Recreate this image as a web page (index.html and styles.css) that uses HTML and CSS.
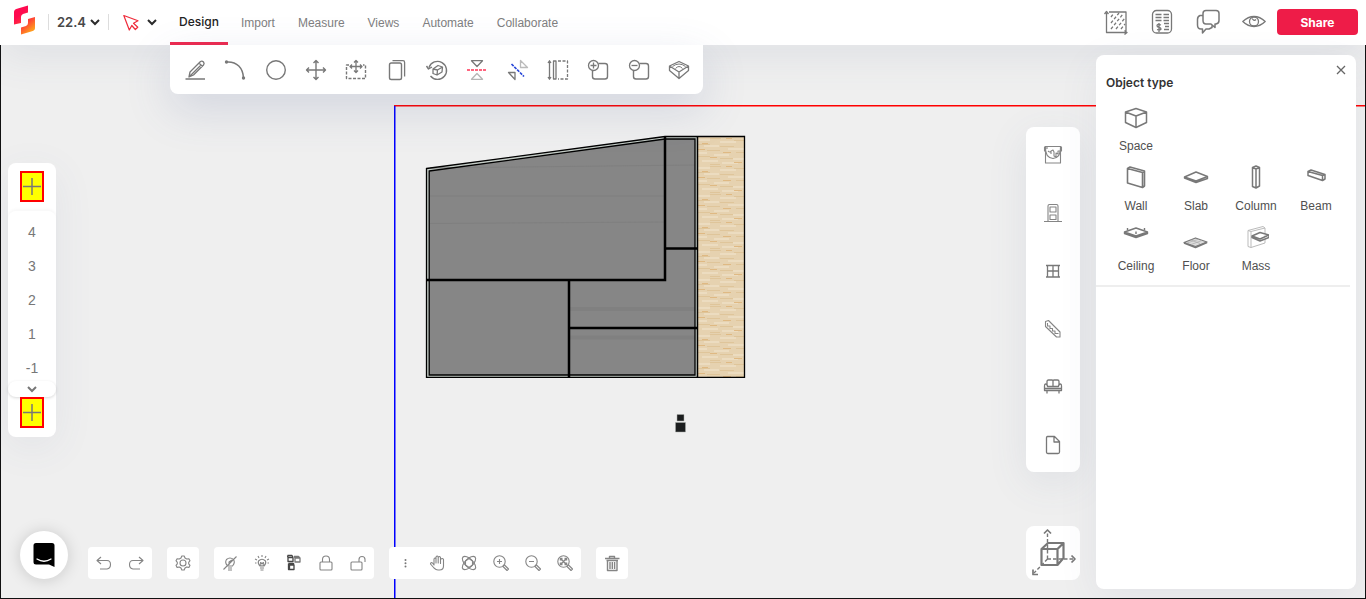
FILE: index.html
```html
<!DOCTYPE html>
<html lang="en">
<head>
<meta charset="utf-8">
<meta name="viewport" content="width=device-width, initial-scale=1">
<title>Design workspace</title>
<link rel="stylesheet" href="styles.css">
</head>
<body>
<div class="app">
  <svg class="scene" role="img" aria-label="Floor plan">
    <defs>
      <pattern id="wood" x="698" y="137" width="47" height="28" patternUnits="userSpaceOnUse">
        <rect width="47" height="28" fill="#e6d2b0"/>
        <path stroke="#ecdcc0" stroke-width="2" d="M0 3H12M22 5H38M6 9H21M30 12H47M0 16H9M16 18H31M35 22H47M4 24H20M24 26H40"/>
        <path stroke="#dfc59a" stroke-width="1" d="M12 1.500H23M36 3.500H47M0 7.500H12M22 9.500H36M9 13.500H22M38 15.500H47M0 19.500H12M22 21.500H35M12 27.500H22"/>
        <path stroke="#dfb983" stroke-width="1" d="M28 1.500H34M4 6.500H10M0 12.500H7M25 15.500H33M12 20.500H19M36 25.500H44"/>
      </pattern>
    </defs>
    <line x1="394" y1="105.750" x2="100%" y2="105.750" stroke="#f00" stroke-width="1.500"/>
    <line x1="394.750" y1="106" x2="394.750" y2="100%" stroke="#00f" stroke-width="1.500"/>
    <path d="M426.500 168.500L665 136.500H745V377H426.500Z" fill="#c4ccc6"/>
    <path d="M429 171L665 139H695V375H429Z" fill="#868686"/>
    <path d="M430 196H664M430 223.500L664 222M430 168L695 165" stroke="#7f7f7f" fill="none"/>
    <path d="M570 309H695M570 337.500H695" stroke="#808080" stroke-width="4"/>
    <rect x="698" y="137" width="47" height="240" fill="url(#wood)"/>
    <g fill="none" stroke="#000">
      <path stroke-width="1.300" d="M426.500 168.500L665 136.500H744.500V377.300H426.500Z"/>
      <path stroke-width="1.300" d="M429.200 171L665 139H695V375H429.200Z"/>
      <path stroke-width="1.500" d="M697.500 137V377"/>
      <path stroke-width="2.500" d="M665 137V280H427M569 280V377M569 328H697M665 248.500H697"/>
    </g>
    <path fill="#1b1d1e" stroke="#a9aca9" stroke-width=".5" d="M677 414.500h7v6.500h-7zM675.500 422.500h10v9.500h-10z"/>
  </svg>

  <header class="topbar">
    <a class="logo" href="#" aria-label="Home">
      <svg width="22" height="30" viewBox="0 0 22 30"><defs><linearGradient id="lg" x1="0" y1="0" x2=".6" y2="1"><stop offset=".35" stop-color="#ff0a50"/><stop offset=".7" stop-color="#ff4036"/><stop offset="1" stop-color="#ff9a1e"/></linearGradient></defs><path fill="url(#lg)" d="M0 7Q0 4.500 3 3.700L14 .5V7.500L9 9Q7 9.800 7 12V18L0 19.500ZM21 12V23Q21 25.500 18 26.300L7 29.500V22.500L12 21Q14 20.200 14 18V14Z"/></svg>
    </a>
    <button class="version" type="button">22.4 <svg width="10" height="8" viewBox="0 0 10 8"><path class="chev" d="M1 2l4 4 4-4"/></svg></button>
    <button class="pointer" type="button" aria-label="Selection tool">
      <svg width="16" height="17" viewBox="0 0 16 17"><path fill="none" stroke="#ef2b3a" stroke-width="1.200" stroke-linejoin="round" d="M.8 1.500L15 6.800 10.500 9.300 14.800 13.200 12.300 15.500 8.800 11.500 6.300 16Z"/></svg>
      <svg width="12" height="8" viewBox="0 0 12 8"><path class="chev" d="M2 2l4 4 4-4"/></svg>
    </button>
    <nav class="tabs">
      <a class="tab active" href="#">Design</a>
      <a class="tab" href="#">Import</a>
      <a class="tab" href="#">Measure</a>
      <a class="tab" href="#">Views</a>
      <a class="tab" href="#">Automate</a>
      <a class="tab" href="#">Collaborate</a>
    </nav>
    <div class="actions">
      <button type="button" aria-label="Area"><svg class="ic" width="24" height="26" viewBox="0 0 24 26"><path d="M2.500 4V23.500H22M.5 5L2.500 2.500 4.500 5M20.500 21.500L23 23.500 20.500 25.500M22 22V3H5"/><path stroke-dasharray="3 2" d="M7 8l3-4M7 14L15 4M7 20L19 5M12 20L21 9M17 20l4-5"/></svg></button>
      <button type="button" aria-label="Costs"><svg class="ic" width="24" height="26" viewBox="0 0 24 26"><rect x="2.500" y="1.500" width="19" height="22.500" rx="4"/><path d="M5.500 5.500h6M13.500 5.500H19M5.500 8.500h6M13.500 8.500H19M5.500 11.500h6M13.500 11.500H19M14 14.500h5M15 17.500h4M14 20.500h5M11 16Q7 14.500 7 16.800 7 18 9 18.300 11 18.700 11 20 10.500 21.700 7 20.500M9 14v9"/></svg></button>
      <button type="button" aria-label="Comments"><svg class="ic" width="24" height="26" viewBox="0 0 24 26"><path stroke-width="1.500" d="M10 1.500H20Q23 1.500 23 4.500V11.500Q23 14.500 20 15H19V18.500L15 15H10Q7 15 7 11.500V4.500Q7 1.500 10 1.500ZM7 6.500H4Q1.500 7.500 1.500 10.500V16Q1.500 20 5 20H6.500V24L10 20H13L16 18.500V16.500"/></svg></button>
      <button type="button" aria-label="Preview"><svg class="ic" width="24" height="26" viewBox="0 0 24 26"><path d="M.8 12.500Q6 7.500 12 7.500T23.200 12.500Q18 17.500 12 17.500T.8 12.500Z"/><circle cx="12" cy="12.500" r="4.500"/><path d="M10 9.500Q12 12.500 14 10.500"/></svg></button>
    </div>
    <button class="share" type="button">Share</button>
  </header>

  <main class="workspace">
    <div class="toolbar">
      <button type="button" aria-label="Line"><svg class="ic" width="24" height="24" viewBox="0 0 24 24"><path d="M2.500 21H22M6 19L7 14 17.500 3.500Q19 2.500 20.500 4 21.700 5.500 20.500 7L10.500 17Z M16 5l3.500 3.500M6.500 18.500L18 7"/></svg></button>
      <button type="button" aria-label="Arc"><svg class="ic" width="24" height="24" viewBox="0 0 24 24"><path stroke-width="1.500" d="M4 4C14 3.500 20 10 20.500 20"/><circle class="dot" cx="3.500" cy="4" r="1.700"/><circle class="dot" cx="20.500" cy="20" r="1.700"/></svg></button>
      <button type="button" aria-label="Circle"><svg class="ic" width="24" height="24" viewBox="0 0 24 24"><circle cx="12" cy="12" r="9.300" stroke-width="1.400"/></svg></button>
      <button type="button" aria-label="Move"><svg class="ic" width="24" height="24" viewBox="0 0 24 24"><path stroke-width="1.400" d="M2.500 12H21.500M12 2.500V21.500M5 9.500L2.500 12 5 14.500M19 9.500L21.500 12 19 14.500M9.500 5L12 2.500 14.500 5M9.500 19L12 21.500 14.500 19"/></svg></button>
      <button type="button" aria-label="Move face"><svg class="ic" width="24" height="24" viewBox="0 0 24 24"><path stroke-dasharray="3 1.500" stroke-width="1.400" d="M5 7H2.500V20.500H21.500V7H19"/><path d="M6 8.500H18M12 2.500V14.500M8 6.500L6 8.500 8 10.500M16 6.500L18 8.500 16 10.500M10 4.500L12 2.500 14 4.500M10 12.500L12 14.500 14 12.500"/></svg></button>
      <button type="button" aria-label="Copy"><svg class="ic" width="24" height="24" viewBox="0 0 24 24"><rect x="4.500" y="5" width="12" height="16.500" rx="1.800" stroke-width="1.400"/><path d="M7.500 2.700H18Q19.600 2.700 19.600 4.500V18.500"/></svg></button>
      <button type="button" aria-label="Rotate"><svg class="ic" width="24" height="24" viewBox="0 0 24 24"><path stroke-width="1.400" d="M4 9.500A9 9 0 1 1 5.500 18M1.500 8L3.500 11 7 9"/><path d="M8 11L13 7.500 17.500 9 17 14 12 17 8 15.500ZM8 11L12.500 12 17.500 9M12.500 12L12 17"/></svg></button>
      <button type="button" aria-label="Mirror horizontal"><svg class="ic" width="24" height="24" viewBox="0 0 24 24"><path d="M6.500 2.700H17.500L12 8.500Z"/><path opacity=".55" d="M6.500 21.300H17.500L12 15.500Z"/><path class="red" stroke-width="1.600" stroke-dasharray="3 1" d="M2 12H22"/></svg></button>
      <button type="button" aria-label="Mirror diagonal"><svg class="ic" width="24" height="24" viewBox="0 0 24 24"><path opacity=".5" d="M14.500 2.500V9.500H21.500Z"/><path d="M9 21.500V14.500H2.500Z"/><path class="blue" stroke-width="1.600" stroke-dasharray="3 1" d="M5.500 6L18 18.500"/></svg></button>
      <button type="button" aria-label="Offset"><svg class="ic" width="24" height="24" viewBox="0 0 24 24"><path d="M3.500 3V21M2 5L3.500 2.800 5 5M2 19L3.500 21.200 5 19M7.500 3H10V21H7.500Z"/><path stroke-dasharray="3 1.500" d="M12 3H21.500V21H12"/></svg></button>
      <button type="button" aria-label="Add shape"><svg class="ic" width="24" height="24" viewBox="0 0 24 24"><path stroke-width="1.400" d="M12.500 5.500H19Q21.500 5.500 21.500 8V18.500Q21.500 21 19 21H9Q6.500 21 6.500 18.500V13"/><circle cx="7.500" cy="7.500" r="5"/><path d="M4.500 7.500h6M7.500 4.500v6"/></svg></button>
      <button type="button" aria-label="Subtract shape"><svg class="ic" width="24" height="24" viewBox="0 0 24 24"><path stroke-width="1.400" d="M12.500 5.500H19Q21.500 5.500 21.500 8V18.500Q21.500 21 19 21H9Q6.500 21 6.500 18.500V13"/><circle cx="7.500" cy="7.500" r="5"/><path d="M4.500 7.500h6"/></svg></button>
      <button type="button" aria-label="Terrain"><svg class="ic" width="24" height="24" viewBox="0 0 24 24"><path d="M2.500 8L12 3.500 21.500 8V12.500L12 20.500 2.500 12.500ZM2.500 8L12 14 21.500 8M12 14V20.500"/><path stroke-width="1" d="M5.500 8.500Q12 3.500 18.500 8.500M8.500 10.500Q12 6.500 15.500 10.500"/></svg></button>
    </div>

    <div class="levels">
      <button class="add" type="button" aria-label="Add level above"><svg width="18" height="18" viewBox="0 0 18 18"><path d="M0 8.500H18M9 0V17"/></svg></button>
      <div class="level-list">
        <button type="button">4</button>
        <button type="button">3</button>
        <button type="button">2</button>
        <button type="button">1</button>
        <button type="button">-1</button>
      </div>
      <button class="more" type="button" aria-label="More levels"><svg width="12" height="8" viewBox="0 0 12 8"><path d="M2 2l4 4 4-4"/></svg></button>
      <button class="add" type="button" aria-label="Add level below"><svg width="18" height="18" viewBox="0 0 18 18"><path d="M0 8.500H18M9 0V17"/></svg></button>
    </div>

    <div class="bottom">
      <button class="chat" type="button" aria-label="Chat"><svg width="24" height="26" viewBox="0 0 24 26"><path d="M4 1H20Q22.500 1 22.500 3.500V25L17 22.500H4Q1.500 22.500 1.500 20V3.500Q1.500 1 4 1Z"/><path fill="none" stroke="#fff" stroke-width="1.300" stroke-linecap="round" d="M5 17Q12 21.500 19 17"/></svg></button>
      <div class="group">
        <button type="button" aria-label="Undo"><svg class="ic thin" width="18" height="18" viewBox="0 0 18 18"><path d="M6 3L2 6.500 6 10M2 6.500H12Q15.500 6.500 15.500 10.500T12 15H5"/></svg></button>
        <button type="button" aria-label="Redo"><svg class="ic thin" width="18" height="18" viewBox="0 0 18 18"><path d="M12 3L16 6.500 12 10M16 6.500H6Q2.500 6.500 2.500 10.500T6 15H13"/></svg></button>
      </div>
      <div class="group">
        <button type="button" aria-label="Settings"><svg class="ic thin" width="18" height="18" viewBox="0 0 18 18"><path d="M7 4L7.800 2H10.200L11 4 12.700 5 14.900 4.700 16 6.700 14.700 8.300V9.800L16 11.300 14.900 13.400 12.700 13 11 14 10.200 16H7.800L7 14 5.300 13 3.100 13.400 2 11.300 3.300 9.800V8.300L2 6.700 3.100 4.700 5.300 5Z"/><circle cx="9" cy="9" r="3"/></svg></button>
      </div>
      <div class="group">
        <button type="button" aria-label="Hide"><svg class="ic thin" width="18" height="18" viewBox="0 0 18 18"><path d="M6.500 12Q3.500 8.500 5.500 5.500 9 2.500 12.500 5.500 14.500 8.500 11.500 12ZM7 14h4M7 16h4M2.500 15.500L15.500 2.500M8 11V8l3-2"/></svg></button>
        <button type="button" aria-label="Show"><svg class="ic thin" width="18" height="18" viewBox="0 0 18 18"><path d="M7 12Q4.500 9.500 5.500 7 9 3.500 12.500 7 13.500 9.500 11 12ZM7 14h4M7.500 16h3M8 12L7.500 8.500 9 9.500 10.500 8.500 10 12M9 1v2M5 2l1 2M13 2l-1 2M2 5l2 1M16 5l-2 1M2 9h1.500M14.500 9H16"/></svg></button>
        <button type="button" aria-label="Isolate"><svg class="ic" width="18" height="18" viewBox="0 0 18 18"><path class="dark" d="M3 3.500h5v4H3zM2.500 1.500H7l1 2M3 3.500l-.5-2"/><path d="M10 4h5v4h-5zM9 2.500h4.500l1.500 1.500M10 4L9 2.500"/><path class="dark" d="M4.500 11h4.500v4.500H4.500zM3.500 9.500V15.500H9M3.500 9.500h5L9 11"/></svg></button>
        <button type="button" aria-label="Lock"><svg class="ic thin" width="18" height="18" viewBox="0 0 18 18"><rect x="3" y="8" width="12" height="8" rx="1"/><path d="M5.500 8V5.500Q5.500 2 9 2T12.500 5.500V8"/></svg></button>
        <button type="button" aria-label="Unlock"><svg class="ic thin" width="18" height="18" viewBox="0 0 18 18"><rect x="2" y="8" width="11" height="8" rx="1"/><path d="M10 8V5.500Q10 2.500 13 2.500T16 5.500V8"/></svg></button>
      </div>
      <div class="group">
        <button type="button" aria-label="More options"><svg class="ic" width="18" height="18" viewBox="0 0 18 18"><circle class="dot" cx="9.500" cy="6" r="1"/><circle class="dot" cx="9.500" cy="9.200" r="1"/><circle class="dot" cx="9.500" cy="12.400" r="1"/></svg></button>
        <button type="button" aria-label="Pan"><svg class="ic thin" width="18" height="18" viewBox="0 0 18 18"><path d="M6 11V5Q7 3 8 5V9 3Q9.200 1 10.200 3V9 3.500Q11.500 1.500 12.500 3.500V9.500 5.500Q14.500 3.500 15.500 5.500V12Q15.500 16 11.500 16H10Q8 16 6 14L2.500 10Q2.500 8 4.500 9Z"/></svg></button>
        <button type="button" aria-label="Orbit"><svg class="ic thin" width="18" height="18" viewBox="0 0 18 18"><ellipse cx="9" cy="9" rx="8.500" ry="4" transform="rotate(45 9 9)"/><ellipse cx="9" cy="9" rx="8.500" ry="4" transform="rotate(-45 9 9)"/><path d="M5.500 7L9 4.500 12.500 7V11L9 13.500 5.500 11Z"/></svg></button>
        <button type="button" aria-label="Zoom in"><svg class="ic thin" width="18" height="18" viewBox="0 0 18 18"><circle cx="7.500" cy="7.500" r="5.700"/><path d="M5 7.500h5M7.500 5v5M11.500 11.500L12.500 11 16.500 15 15 16.500 11 12.500Z"/></svg></button>
        <button type="button" aria-label="Zoom out"><svg class="ic thin" width="18" height="18" viewBox="0 0 18 18"><circle cx="7.500" cy="7.500" r="5.700"/><path d="M5 7.500h5M11.500 11.500L12.500 11 16.500 15 15 16.500 11 12.500Z"/></svg></button>
        <button type="button" aria-label="Zoom to fit"><svg class="ic thin" width="18" height="18" viewBox="0 0 18 18"><circle cx="7.500" cy="7.500" r="5.700"/><path stroke-width="1.500" d="M4.500 4.500l6 6M10.500 4.500l-6 6M4.500 6.500v-2h2M8.500 4.500h2v2M4.500 8.500v2h2M8.500 10.500h2v-2"/><path d="M11.500 11.500L12.500 11 16.500 15 15 16.500 11 12.500Z"/></svg></button>
      </div>
      <div class="group">
        <button type="button" aria-label="Delete"><svg class="ic thin" width="18" height="18" viewBox="0 0 18 18"><path stroke-width="1.400" d="M2 4.500H16.500M6.500 4V2.500h5V4M3.500 6.500H15M4.500 7V16.500H14V7M7 8v7M9.300 8v7M11.600 8v7"/></svg></button>
      </div>
    </div>

    <div class="sidebar">
      <div class="library">
        <button type="button" aria-label="Materials"><svg class="ic thin" width="20" height="20" viewBox="0 0 20 20"><path d="M1.500 1.500H18.500M2.500 2V18H17.500V2M1.500 2V6H2.500M18.500 2V6H17.500M2.500 2Q2 12.500 10 13.500 18 12.500 17.500 2M4 2v2M5 6q2 2 3 0v3M8 6l2-1 1 2v4l2 1V8l2 1V6h2"/></svg></button>
        <button type="button" aria-label="Doors"><svg class="ic thin" width="20" height="20" viewBox="0 0 20 20"><path d="M1 18.500H19M5 18V3Q5 1.500 6.500 1.500H13.500Q15 1.500 15 3V18M7 4h6v5h-6zM7 12h6v4.500H7Z"/></svg></button>
        <button type="button" aria-label="Windows"><svg class="ic" width="20" height="20" viewBox="0 0 20 20"><path d="M3 4.500H17M3 16H17M4.500 4.500V16M10 4.500V16M15.500 4.500V16M4.500 10H15.500"/></svg></button>
        <button type="button" aria-label="Stairs"><svg class="ic thin" width="20" height="20" viewBox="0 0 20 20"><path d="M2.500 7.500V2.500L5.500 1.500 17 13V18H13.500L2.500 7.500ZM4.500 4v3H7v2.500h2.500V12H12v2.500H15.500"/></svg></button>
        <button type="button" aria-label="Furniture"><svg class="ic" width="20" height="20" viewBox="0 0 20 20"><path d="M4 8.500V4.500Q4 3 5.500 3H9Q10 3 10 4V9M10 4Q10 3 11 3H14.500Q16 3 16 4.500V8.500M2.500 7Q4.500 7 4.500 9.500H15.500Q15.500 7 17.500 7 18.500 7 18.500 9V13.500H1.500V9Q1.500 7 2.500 7ZM2 11.500H18M4 13.500V16.500M16 13.500V16.500"/></svg></button>
        <button type="button" aria-label="Documents"><svg class="ic" width="20" height="20" viewBox="0 0 20 20"><path d="M4.500 1.500H11.500L16.500 6.500V17Q16.500 18.500 15 18.500H5Q3.500 18.500 3.500 17V3Q3.500 1.500 4.500 1.500ZM11 1.500V7H16.500"/></svg></button>
      </div>
      <button class="cube" type="button" aria-label="View orientation"><svg class="ic" width="48" height="50" viewBox="0 0 48 50"><path stroke-width="2.200" d="M12.500 21H28.500V37H12.500ZM12.500 21L19 15H34.500V30L28.500 37M28.500 21L34.500 15"/><path stroke-dasharray="3.500 2" stroke-width="1.400" d="M18.500 31V4M18.500 31H45M18.500 31L5 45"/><path stroke-width="1.700" d="M15 5.500L18.500 2 22 5.500M42.500 27.500L46 31 42.500 34.500M4 41.500V46.500H9"/></svg></button>
    </div>

    <aside class="panel">
      <button class="close" type="button" aria-label="Close"><svg width="10" height="10" viewBox="0 0 10 10"><path d="M1 1l8 8M9 1L1 9"/></svg></button>
      <h2>Object type</h2>
      <div class="types">
        <button class="solo" type="button"><svg class="ic" width="26" height="42" viewBox="0 0 26 42"><path stroke-width="1.500" d="M2.500 15L13 11.500 23.500 15V25.500L13 30.500 2.500 25.500ZM2.500 15L13 19 23.500 15M13 19V30.500"/></svg><span>Space</span></button>
        <button type="button"><svg class="ic" width="26" height="42" viewBox="0 0 26 42"><path stroke-width="1.600" d="M4.500 11.500L7 10 21.500 14V29L19.500 30.500 4.500 26ZM4.500 11.500L19.500 15.500V30.500M19.500 15.500L21.500 14"/></svg><span>Wall</span></button>
        <button type="button"><svg class="ic" width="26" height="42" viewBox="0 0 26 42"><path stroke-width="1.400" d="M1.500 20L13 15 24.500 19.500V21.500L13 25.500 1.500 21ZM1.500 20L13 24 24.500 19.500"/></svg><span>Slab</span></button>
        <button type="button"><svg class="ic" width="26" height="42" viewBox="0 0 26 42"><path stroke-width="1.500" d="M9.500 10.500L13 9 16.500 10.500V29L13 31 9.500 29.500ZM9.500 10.500L13 12 16.500 10.500M13 12V30.500"/></svg><span>Column</span></button>
        <button type="button"><svg class="ic" width="26" height="42" viewBox="0 0 26 42"><path stroke-width="1.500" d="M5 14.500L8 13 22 17.500V22L19.500 23.500 5 18.500ZM5 14.500L19.500 18.500V23.500M19.500 18.500L22 17.500"/></svg><span>Beam</span></button>
        <button type="button"><svg class="ic" width="26" height="42" viewBox="0 0 26 42"><path stroke-width="1.400" d="M1.500 15L13 11 24.500 15V16.500L13 20.500 1.500 16.500ZM1.500 15L13 19 24.500 15M4.500 11V13M21.500 11V13M13 14.500V17"/></svg><span>Ceiling</span></button>
        <button type="button"><svg class="ic" width="26" height="42" viewBox="0 0 26 42"><path fill="#ddd" stroke-width="1.300" d="M1 25.500L12.500 21 24 25 12.500 29.500Z"/><path stroke-width="1.700" d="M1 26L12.500 30.500 24 25.500"/><path stroke="#aaa" stroke-width=".7" d="M4 26L15 22.500M8 27.500L19 23.500M8 23L17 26.500"/></svg><span>Floor</span></button>
        <button type="button"><svg class="ic" width="26" height="42" viewBox="0 0 26 42"><path stroke="#bbb" stroke-width="1" d="M5 13.500L20 9.500 22 11V26L8 30.500 5 29.500ZM5 13.500L8 14.500 22 11M8 14.500V30.500"/><path stroke-width="1.500" fill="#fff" d="M9 19L17 15.500 26 18V20.500L17 24 9 20.500ZM9 19L17 22 26 18"/></svg><span>Mass</span></button>
      </div>
    </aside>
  </main>
</div>
</body>
</html>
```

FILE: styles.css
```css
* { box-sizing: border-box; }

body {
  margin: 0;
  font-family: "Liberation Sans", sans-serif;
  font-size: 12px;
  color: #333;
}

button {
  margin: 0;
  padding: 0;
  border: 0;
  background: none;
  font: inherit;
  color: inherit;
  cursor: pointer;
  display: flex;
  align-items: center;
  justify-content: center;
}

a { color: inherit; text-decoration: none; }
svg { display: block; flex: none; }

.ic { fill: none; stroke: #787878; stroke-width: 1.3; stroke-linejoin: round; }
.ic.thin { stroke-width: 1.1; stroke: #858585; }
.ic .dark { stroke: #454545; }
.ic .dot { fill: #787878; stroke: none; }
.ic .red { stroke: #ff3355; }
.ic .blue { stroke: #2746d8; }

.app {
  position: relative;
  display: flex;
  flex-direction: column;
  min-height: 100vh;
  background: #efefef;
  overflow: hidden;
}

/* drawing surface behind the floating controls */
.scene {
  position: absolute;
  top: 0;
  left: 0;
  width: 100%;
  height: 100%;
}

.topbar {
  position: relative;
  z-index: 2;
  display: flex;
  align-items: center;
  height: 45px;
  padding: 0 8px 0 14px;
  background: #fff;
  box-shadow: 0 10px 40px rgba(80, 95, 140, .1);
}

.topbar > * { margin-bottom: 1px; }

.topbar .logo { margin-bottom: 5px; }

.chev { fill: none; stroke: #2b2b2b; stroke-width: 2; }

.version {
  gap: 4px;
  height: 16px;
  margin-left: 12px;
  padding: 0 8px;
  border: solid #ddd;
  border-width: 0 1px;
  font-family: Inter, sans-serif;
  font-size: 13px;
  font-weight: 600;
  color: #484848;
}

.pointer { gap: 7px; margin-left: 14px; }

.topbar .tabs {
  display: flex;
  align-self: stretch;
  gap: 3px;
  margin: 0 0 0 12px;
}

.tab {
  display: flex;
  align-items: center;
  padding: 0 10px;
  color: #808080;
}

.tab.active {
  padding: 0 9px;
  font-family: Inter, sans-serif;
  font-weight: 500;
  color: #222;
  border-bottom: 3px solid #ee2b50;
}

.actions { display: flex; gap: 22px; margin-left: auto; }

.share {
  width: 81px;
  height: 26px;
  margin-left: 11px;
  border-radius: 4px;
  background: #ee1c48;
  color: #fff;
  font-family: Inter, sans-serif;
  font-weight: 700;
}

.workspace {
  position: relative;
  flex: 1;
  border: solid #111;
  border-width: 0 1px 1px;
}

.toolbar {
  position: absolute;
  z-index: 2;
  top: 0;
  left: 169px;
  display: flex;
  padding: 0 4px 0 5px;
  background: #fff;
  border-radius: 0 0 8px 8px;
  box-shadow: 0 15px 45px rgba(80, 95, 150, .18);
}

.toolbar button { width: 40px; height: 49px; }
.toolbar button:nth-of-type(3n) { width: 41px; }

.levels {
  position: absolute;
  top: 118px;
  left: 7px;
  width: 48px;
  display: flex;
  flex-direction: column;
  align-items: center;
  padding: 8px 0 9px;
  background: #fff;
  border-radius: 8px;
  box-shadow: 0 10px 40px rgba(80, 95, 140, .08);
}

.add {
  width: 24px;
  height: 31px;
  border: 2px solid #f00;
  background: #ff0;
}

.add path { stroke: #777; stroke-width: 1.5; }

.level-list {
  align-self: stretch;
  margin-top: 9px;
  padding: 4px 0 0;
  border-radius: 8px 8px 0 0;
  box-shadow: 0 -2px 3px rgba(0, 0, 0, .03);
  color: #777;
  font-size: 14px;
}

.level-list button { width: 100%; height: 34px; }

.more {
  align-self: stretch;
  height: 16px;
  margin-top: -4px;
  border-radius: 8px;
  background: #fff;
  box-shadow: 0 1px 3px rgba(0, 0, 0, .15);
}

.more path { fill: none; stroke: #777; stroke-width: 2; }

.bottom {
  position: absolute;
  left: 19px;
  bottom: 19px;
  display: flex;
  align-items: flex-end;
  gap: 15px;
}

.chat {
  width: 48px;
  height: 48px;
  margin-right: 5px;
  border-radius: 50%;
  background: #fff;
  box-shadow: 0 1px 16px rgba(0, 0, 0, .16);
}

.group { display: flex; background: #fff; border-radius: 4px; }
.group button { width: 32px; height: 32px; }

.sidebar {
  position: absolute;
  top: 82px;
  right: 285px;
  bottom: 18px;
  width: 54px;
  display: flex;
  flex-direction: column;
  justify-content: space-between;
}

.library {
  display: flex;
  flex-direction: column;
  gap: 28px;
  padding: 13px 0 12px;
  background: #fff;
  border-radius: 8px;
  box-shadow: 0 10px 40px rgba(80, 95, 140, .1);
}

.library button { height: 30px; }

.cube { height: 54px; background: #fff; border-radius: 8px; }

.panel {
  position: absolute;
  z-index: 2;
  top: 10px;
  right: 9px;
  bottom: 9px;
  width: 260px;
  background: #fff;
  border-radius: 8px;
  box-shadow: 0 10px 40px rgba(80, 95, 140, .08);
}

.close { position: absolute; top: 10px; right: 10px; }
.close path { stroke: #666; stroke-width: 1.3; }

.panel h2 {
  margin: 0;
  padding: 20px 10px 6px;
  font-family: Inter, sans-serif;
  font-size: 12px;
  line-height: 16px;
  font-weight: 600;
  color: #333;
}

.types {
  display: grid;
  grid-template-columns: repeat(4, 60px);
  margin-right: 6px;
  padding: 0 10px 8px;
  border-bottom: 2px solid #eee;
}

.types button {
  flex-direction: column;
  height: 60px;
  justify-content: flex-start;
  line-height: 14px;
  color: #505050;
}

.types .solo { grid-column: 1 / -1; justify-self: start; width: 60px; }
```
